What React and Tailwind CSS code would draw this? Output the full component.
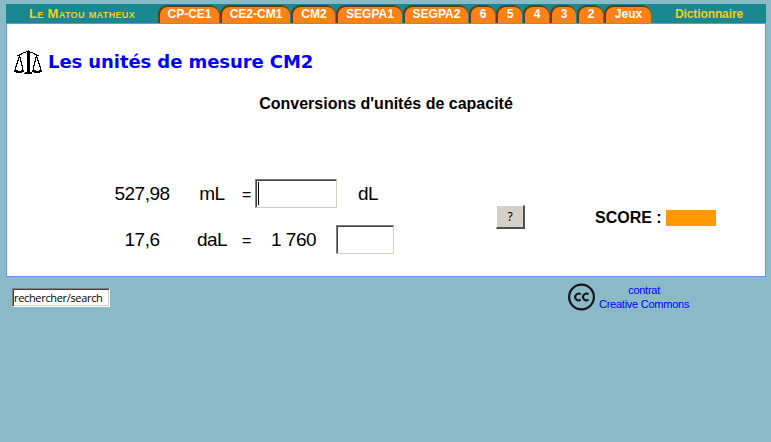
const tabs = [
  { label: 'CP-CE1', size: 'w-[62px]' },
  { label: 'CE2-CM1', size: 'w-[71px]' },
  { label: 'CM2', size: 'w-[45px]' },
  { label: 'SEGPA1', size: 'w-[67px]' },
  { label: 'SEGPA2', size: 'w-[66px]' },
  { label: '6', size: 'w-[27px]' },
  { label: '5', size: 'w-[27px]' },
  { label: '4', size: 'w-[27px]' },
  { label: '3', size: 'w-[27px]' },
  { label: '2', size: 'w-[27px]' },
  { label: 'Jeux', size: 'w-[48px]' },
];

const sunken =
  'border border-t-[#808080] border-l-[#808080] border-r-[#d4d0c8] border-b-[#d4d0c8] bg-white shadow-[inset_1px_1px_0_#404040]';

function Tab({ label, size }) {
  return (
    <a className={`${size} h-[18px] shrink-0 pr-px`}>
      <span className="block h-full rounded-t-[9px] bg-[#6b3a10] pt-[2px] pl-[2px]">
        <span className="block h-full rounded-t-[8px] bg-[#fb8214] text-center leading-[14px] text-white">
          {label}
        </span>
      </span>
    </a>
  );
}

function Scales() {
  return (
    <svg width="28" height="24" viewBox="0 0 28 24" fill="none" stroke="#000" shapeRendering="crispEdges">
      <path d="M14.500 1v22" strokeWidth="3" />
      <path d="M12 1.500h4M14 .500h1M11 22.500h7M10 23.500h8" />
      <path d="M3 5.500h3M5 4.500h3M7 3.500h2M9 2.500h3M16 2.500h3M19 3.500h2M20 4.500h3M22 5.500h3" />
      <path d="M5.500 5.500v2M5 7.500L1 19.500M6 7.500L9 19.500M22.500 5.500v2M22 7.500L19 19.500M23 7.500L27 19.500" />
      <path d="M0 20.500h4M7 20.500h3M0 21.500h10M2 22.500h6M18 20.500h4M25 20.500h3M18 21.500h10M20 22.500h6" />
    </svg>
  );
}

function CreativeCommons() {
  return (
    <svg width="28" height="28" viewBox="0 0 28 28" fill="none" stroke="#151515">
      <circle cx="13.500" cy="14" r="12.400" strokeWidth="2.200" />
      <path d="M12.700 11.500a3.300 3.300 0 1 0 0 5M20.500 11.500a3.300 3.300 0 1 0 0 5" strokeWidth="2" />
    </svg>
  );
}

export default function App() {
  return (
    <div className="h-[442px] w-[771px] overflow-hidden bg-[#8abac8] pt-1 pl-[6px] font-['Liberation_Sans',Arial,sans-serif] text-black">
      <nav className="flex h-[19px] w-[760px] items-end bg-[#198890] text-[12px] font-bold">
        <span className="h-[18px] w-[152px] text-center text-[13px] leading-[18px] tracking-[0.35px] whitespace-nowrap text-[#f0cf20] [font-variant:small-caps]">
          Le Matou matheux
        </span>
        {tabs.map((tab) => (
          <Tab key={tab.label} {...tab} />
        ))}
        <span className="h-[18px] flex-1 text-center leading-[18px] tracking-[-0.1px] text-[#f0cf20]">Dictionnaire</span>
      </nav>
      <main className="h-[254px] w-[760px] border border-[#6495ed] bg-white">
        <h1 className="flex h-[53px] items-start gap-[6px] pt-[26px] pl-[7px] font-['DejaVu_Sans',Verdana,sans-serif] text-[18px] leading-[24px] font-bold tracking-[-0.08px] text-[#0000ff]">
          <Scales />
          Les unités de mesure CM2
        </h1>
        <h2 className="mt-[17px] text-center text-[16px] leading-5 font-bold">Conversions d'unités de capacité</h2>
        <div className="mt-[56px] flex">
          <div className="w-[489px] text-[19px] tracking-[-0.5px]">
            <div className="flex h-[46px] items-center">
              <span className="ml-[95px] w-[80px] pt-[3px] text-center">527,98</span>
              <span className="w-[60px] pt-[3px] text-center">mL</span>
              <span className="w-[13px] pt-[4px] text-[16px]">=</span>
              <span className={`${sunken} h-[29px] w-[82px] pt-[2px] pl-[2px]`}>
                <span className="block h-[23px] w-px bg-black" />
              </span>
              <span className="ml-[21px] pt-[3px]">dL</span>
            </div>
            <div className="flex h-[46px] items-center">
              <span className="ml-[95px] w-[80px] pt-[3px] text-center">17,6</span>
              <span className="w-[60px] pt-[3px] text-center">daL</span>
              <span className="w-[13px] pt-[4px] text-[16px]">=</span>
              <span className="w-[81px] pt-[3px] pl-[16px]">1 760</span>
              <span className={`${sunken} h-[29px] w-[58px]`} />
            </div>
          </div>
          <button className="mt-[35px] h-6 w-[29px] border-t border-r-2 border-b-2 border-l border-t-white border-r-[#505050] border-b-[#505050] border-l-white bg-[#d4d0c8] font-['Noto_Sans',Tahoma,sans-serif] text-[12px] leading-5">
            ?
          </button>
          <div className="mt-[39px] ml-[70px] flex text-[16px] leading-[18px] font-bold">
            <span className="w-[71px] whitespace-nowrap">SCORE :</span>
            <span className="mt-px h-4 w-[50px] bg-[#ff9900]" />
          </div>
        </div>
      </main>
      <footer className="flex">
        <div className="mt-[11px] ml-[6px] h-[19px] w-[98px] border border-t-[#808080] border-r-white border-b-white border-l-[#808080] bg-white pt-px pl-px font-['Open_Sans',sans-serif] text-[11px] leading-[16px] tracking-[-0.33px] whitespace-nowrap shadow-[inset_1px_1px_0_#404040,inset_-1px_-1px_0_#d4d0c8]">
          rechercher/search
        </div>
        <div className="mt-[6px] ml-[458px] flex">
          <CreativeCommons />
          <a className="ml-[3px] text-center text-[11px] leading-[14px] tracking-[-0.25px] text-[#0000ff]">
            contrat
            <br />
            Creative Commons
          </a>
        </div>
      </footer>
    </div>
  );
}
